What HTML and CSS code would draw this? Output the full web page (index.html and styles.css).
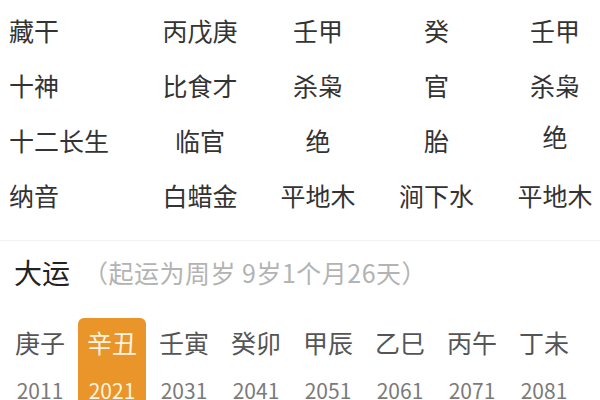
FILE: index.html
```html
<!DOCTYPE html>
<html lang="zh">
<head>
<meta charset="utf-8">
<link rel="stylesheet" href="styles.css">
</head>
<body>
<div class="page">
  <div class="table">
    <div class="row"><div class="label">藏干</div><div class="cell">丙戊庚</div><div class="cell">壬甲</div><div class="cell">癸</div><div class="cell">壬甲</div></div>
    <div class="row"><div class="label">十神</div><div class="cell">比食才</div><div class="cell">杀枭</div><div class="cell">官</div><div class="cell">杀枭</div></div>
    <div class="row"><div class="label">十二长生</div><div class="cell">临官</div><div class="cell">绝</div><div class="cell">胎</div><div class="cell up">绝</div></div>
    <div class="row"><div class="label">纳音</div><div class="cell">白蜡金</div><div class="cell">平地木</div><div class="cell">涧下水</div><div class="cell">平地木</div></div>
  </div>
  <div class="dayun">
    <div class="title"><span class="big">大运</span><span class="note">（起运为周岁 9岁1个月26天）</span></div>
    <div class="items">
      <div class="item"><div class="gz">庚子</div><div class="yr">2011</div></div>
      <div class="item active"><div class="gz">辛丑</div><div class="yr">2021</div></div>
      <div class="item"><div class="gz">壬寅</div><div class="yr">2031</div></div>
      <div class="item"><div class="gz">癸卯</div><div class="yr">2041</div></div>
      <div class="item"><div class="gz">甲辰</div><div class="yr">2051</div></div>
      <div class="item"><div class="gz">乙巳</div><div class="yr">2061</div></div>
      <div class="item"><div class="gz">丙午</div><div class="yr">2071</div></div>
      <div class="item"><div class="gz">丁未</div><div class="yr">2081</div></div>
    </div>
  </div>
</div>
</body>
</html>
```
FILE: styles.css
```css
html, body {
  margin: 0;
  padding: 0;
  background: #ffffff;
}
body {
  font-family: "Noto Sans CJK SC", "Noto Sans", sans-serif;
  width: 600px;
  height: 400px;
  overflow: hidden;
}
.page {
  width: 600px;
  height: 400px;
  overflow: hidden;
}
.table {
  padding-top: 2px;
  width: 620px;
}
.row {
  display: grid;
  grid-template-columns: 141px 118px 118px 119px 118px;
  height: 55px;
  align-items: center;
  font-size: 25px;
  color: #333333;
}
.label {
  padding-left: 9px;
  line-height: 30px;
}
.cell {
  text-align: center;
  line-height: 30px;
}
.cell.up {
  margin-top: -8px;
}
.dayun {
  margin-top: 18px;
  border-top: 1px solid #f1f1f1;
}
.title {
  display: flex;
  align-items: center;
  padding-top: 13px;
  height: 36px;
  padding-left: 14px;
}
.big {
  font-size: 28px;
  color: #222222;
  line-height: 36px;
}
.note {
  font-size: 25px;
  letter-spacing: 0.5px;
  color: #b3b3b3;
  margin-left: 13px;
  line-height: 36px;
}
.items {
  display: flex;
  gap: 4px;
  padding-left: 6px;
  margin-top: 28px;
}
.item {
  width: 68px;
  height: 100px;
  text-align: center;
  padding-top: 9px;
  box-sizing: border-box;
  border-radius: 6px;
}
.item.active {
  background: #e9952a;
}
.gz {
  font-size: 25px;
  line-height: 30px;
  color: #555555;
}
.yr {
  font-size: 21px;
  line-height: 24px;
  margin-top: 21px;
  color: #7a7a7a;
}
.item.active .gz,
.item.active .yr {
  color: #fdf3e2;
}
```
